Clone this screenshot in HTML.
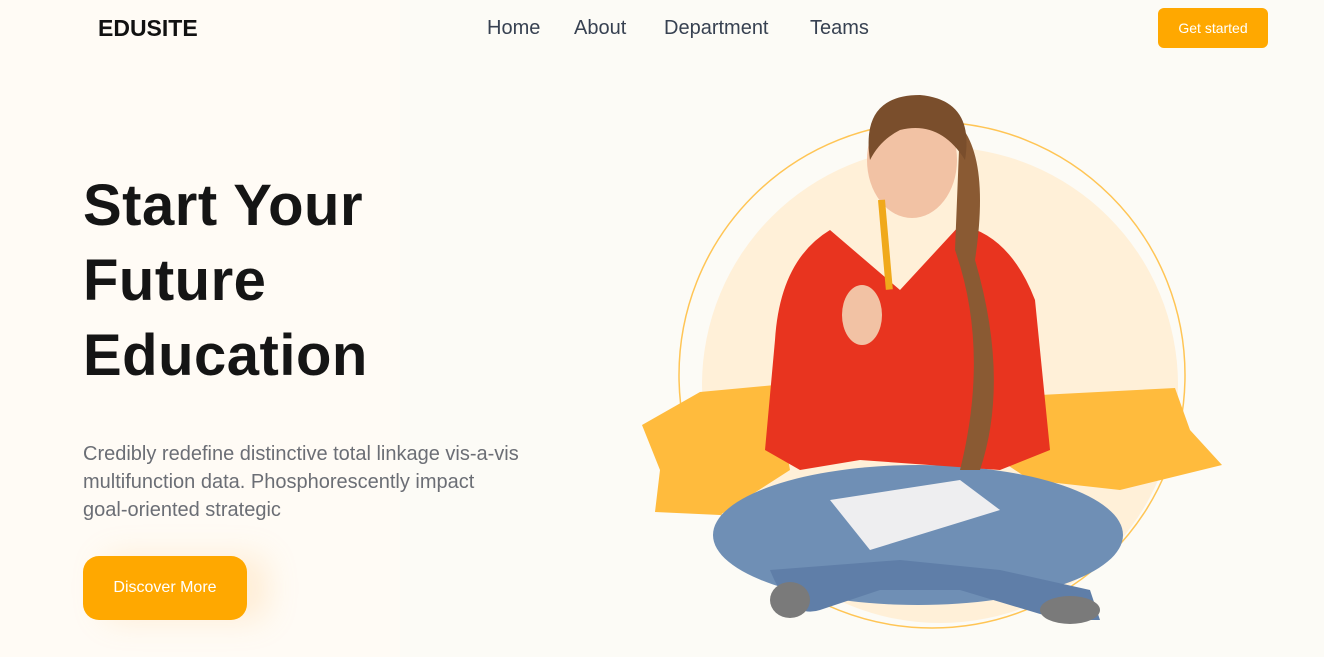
<!DOCTYPE html>
<html><head><meta charset="utf-8"><style>
*{margin:0;padding:0;box-sizing:border-box}
body{width:1324px;height:657px;overflow:hidden;background:#fffbf5;font-family:"Liberation Sans",sans-serif;position:relative}
.right{position:absolute;left:400px;top:0;width:924px;height:657px;background:#fcfbf6}
.logo{position:absolute;left:98px;top:15px;font-size:23px;font-weight:bold;color:#111}
.nav a{position:absolute;top:17px;font-size:20px;color:#374151;text-decoration:none}
.gs{position:absolute;left:1158px;top:8px;width:110px;height:40px;border-radius:6px;background:#ffa800;color:#fff;font-size:14px;text-align:center;line-height:40px}
h1{position:absolute;left:83px;top:168px;font-size:58px;line-height:75px;color:#151515;font-weight:bold;letter-spacing:0.5px}
p{position:absolute;left:83px;top:440px;white-space:nowrap;font-size:20px;line-height:28px;color:#6b6e75}
.btn{position:absolute;left:83px;top:556px;width:164px;height:64px;border-radius:16px;background:#ffa800;color:#fff;font-size:16px;text-align:center;line-height:64px;box-shadow:20px 0 30px rgba(255,200,120,.25)}
svg{position:absolute;left:0;top:0}
</style></head><body>
<div class="right"></div>
<div class="logo">EDUSITE</div>
<div class="nav"><a style="left:487px">Home</a><a style="left:574px">About</a><a style="left:664px">Department</a><a style="left:810px">Teams</a></div>
<div class="gs">Get started</div>
<h1>Start Your<br>Future<br>Education</h1>
<p>Credibly redefine distinctive total linkage vis-a-vis<br>multifunction data. Phosphorescently impact<br>goal-oriented strategic</p>
<div class="btn">Discover More</div>
<svg width="1324" height="657">
<circle cx="940" cy="385" r="238" fill="#fff0d8"/>
<circle cx="932" cy="375" r="253" fill="none" stroke="#ffc555" stroke-width="1.5"/>
<path d="M642 425 L700 392 L775 385 L790 470 L720 515 L655 512 L660 470 Z" fill="#ffbb3d"/>
<path d="M1040 395 L1175 388 L1190 430 L1222 465 L1120 490 L1030 480 L1000 460 Z" fill="#ffbb3d"/>
<ellipse cx="918" cy="535" rx="205" ry="70" fill="#6f8fb5"/>
<path d="M770 570 Q790 620 820 610 L880 590 L960 590 L1060 620 L1100 620 L1090 590 L1000 570 L900 560 Z" fill="#5f7ea8"/>
<ellipse cx="790" cy="600" rx="20" ry="18" fill="#7a7a7a"/>
<ellipse cx="1070" cy="610" rx="30" ry="14" fill="#7a7a7a"/>
<path d="M830 230 Q780 260 775 340 L765 450 L800 470 L860 460 L1000 470 L1050 450 L1035 300 Q1010 235 960 225 L900 290 Z" fill="#e8341f"/>
<path d="M830 500 L960 480 L1000 510 L870 550 Z" fill="#eeeef0"/>
<path d="M960 125 Q990 160 975 260 Q1010 380 980 470 L960 470 Q990 350 955 250 Z" fill="#8a5a33"/>
<ellipse cx="912" cy="160" rx="45" ry="58" fill="#f2c2a4"/>
<path d="M870 160 Q860 95 920 95 Q975 100 965 160 Q940 120 900 130 Q880 140 870 160 Z" fill="#7a4e2c"/>
<rect x="878" y="200" width="7" height="90" fill="#f0a91b" transform="rotate(-5 880 200)"/>
<ellipse cx="862" cy="315" rx="20" ry="30" fill="#f2c2a4"/>
</svg>
</body></html>
